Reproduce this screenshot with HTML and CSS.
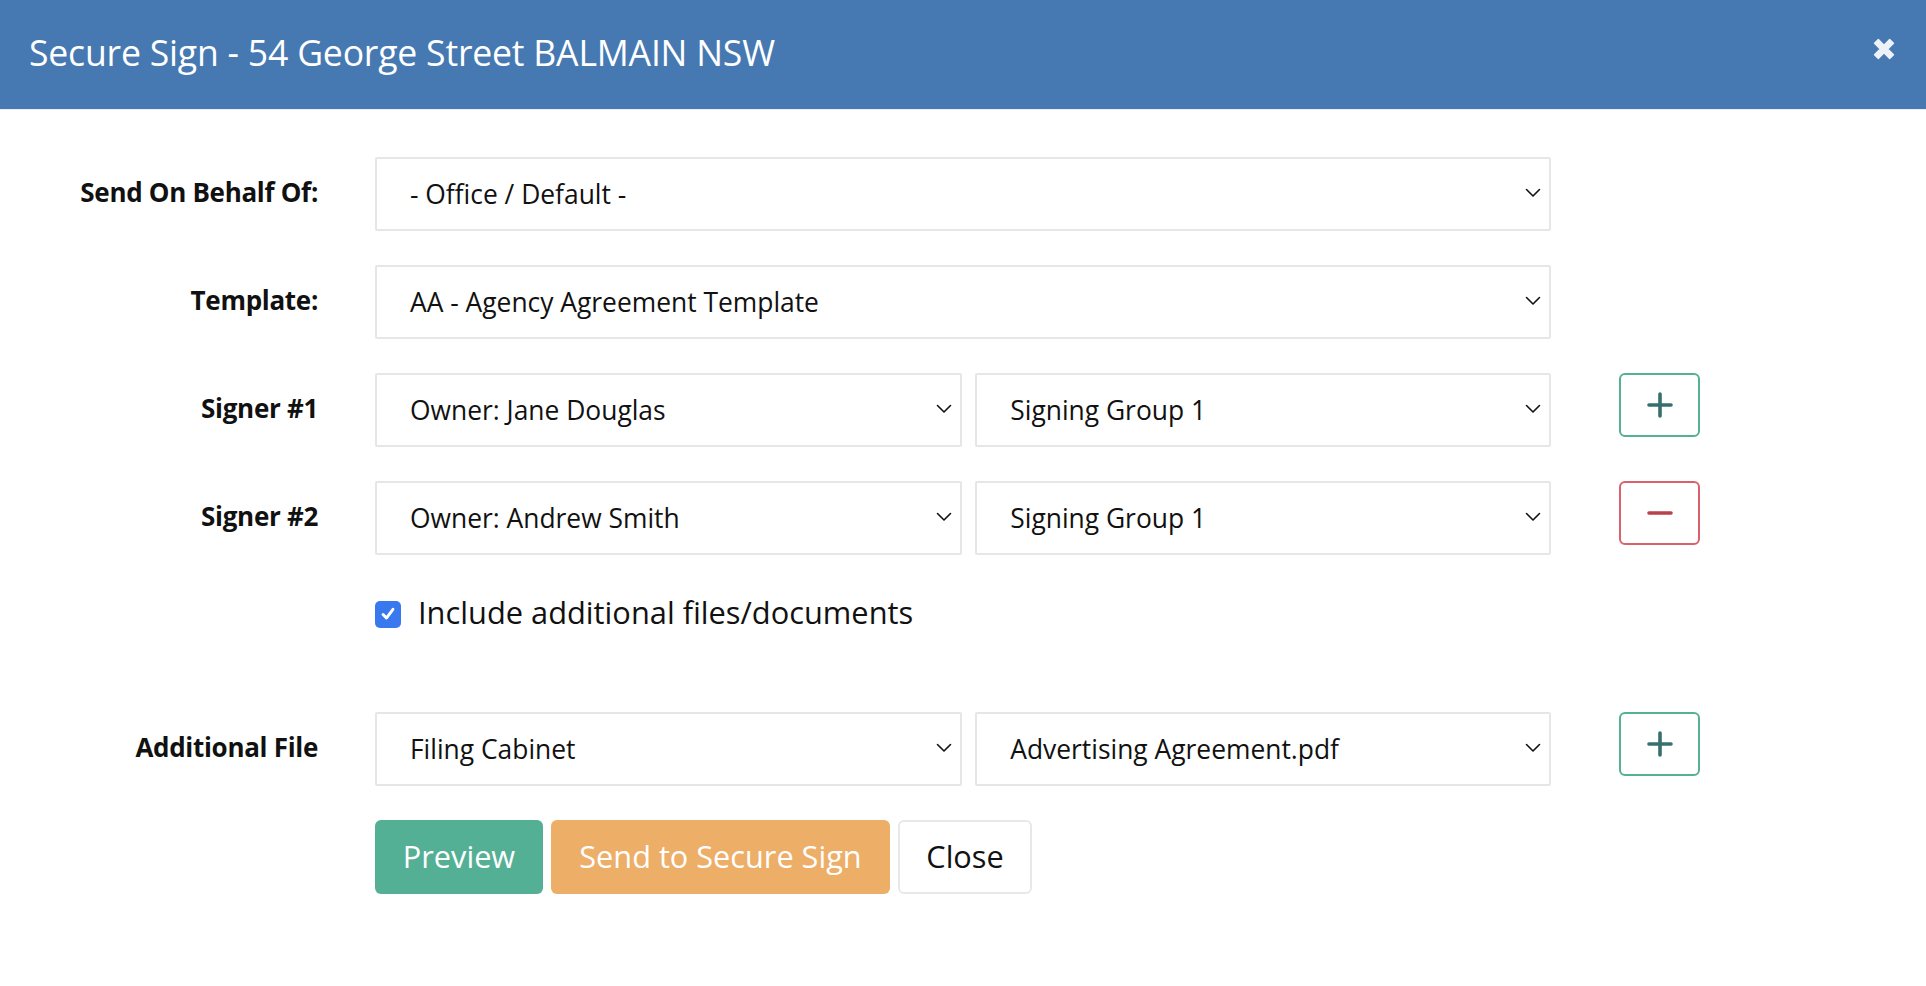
FILE: index.html
```html
<!DOCTYPE html>
<html lang="en">
<head>
<meta charset="utf-8">
<title>Secure Sign</title>
<link rel="stylesheet" href="styles.css">
</head>
<body>
<div class="modal">
  <header class="modal-header">
    <h1 class="modal-title">Secure Sign - 54 George Street BALMAIN NSW</h1>
    <button class="close-btn" aria-label="Close">
      <svg viewBox="0 0 22 22" width="26" height="26"><path d="M3 6.2 6.2 3 11 7.8 15.8 3 19 6.2 14.2 11 19 15.8 15.8 19 11 14.2 6.2 19 3 15.8 7.8 11Z" fill="currentColor" stroke="currentColor" stroke-width="1.2" stroke-linejoin="round"/></svg>
    </button>
  </header>
  <div class="modal-body">
    <div class="form-grid">
      <div class="lbl">Send On Behalf Of:</div>
      <div class="fields">
        <div class="select">- Office / Default -<svg class="chev" viewBox="0 0 16 10"><path d="M1.5 1.5 8 8l6.5-6.5"/></svg></div>
      </div>
      <div class="act"></div>

      <div class="lbl">Template:</div>
      <div class="fields">
        <div class="select">AA - Agency Agreement Template<svg class="chev" viewBox="0 0 16 10"><path d="M1.5 1.5 8 8l6.5-6.5"/></svg></div>
      </div>
      <div class="act"></div>

      <div class="lbl">Signer #1</div>
      <div class="fields split">
        <div class="select">Owner: Jane Douglas<svg class="chev" viewBox="0 0 16 10"><path d="M1.5 1.5 8 8l6.5-6.5"/></svg></div>
        <div class="select">Signing Group 1<svg class="chev" viewBox="0 0 16 10"><path d="M1.5 1.5 8 8l6.5-6.5"/></svg></div>
      </div>
      <div class="act"><button class="icon-btn add"><svg viewBox="0 0 26 26"><path d="M13 2v22M2 13h22"/></svg></button></div>

      <div class="lbl">Signer #2</div>
      <div class="fields split">
        <div class="select">Owner: Andrew Smith<svg class="chev" viewBox="0 0 16 10"><path d="M1.5 1.5 8 8l6.5-6.5"/></svg></div>
        <div class="select">Signing Group 1<svg class="chev" viewBox="0 0 16 10"><path d="M1.5 1.5 8 8l6.5-6.5"/></svg></div>
      </div>
      <div class="act"><button class="icon-btn remove"><svg viewBox="0 0 26 26"><path d="M2 13h22"/></svg></button></div>

      <div class="lbl"></div>
      <label class="check-row">
        <span class="checkbox"><svg viewBox="0 0 16 16"><path d="M3.6 8.4 6.6 11.6 12.4 3.8"/></svg></span>
        <span class="check-text">Include additional files/documents</span>
      </label>
      <div class="act"></div>

      <div class="lbl">Additional File</div>
      <div class="fields split">
        <div class="select">Filing Cabinet<svg class="chev" viewBox="0 0 16 10"><path d="M1.5 1.5 8 8l6.5-6.5"/></svg></div>
        <div class="select">Advertising Agreement.pdf<svg class="chev" viewBox="0 0 16 10"><path d="M1.5 1.5 8 8l6.5-6.5"/></svg></div>
      </div>
      <div class="act"><button class="icon-btn add"><svg viewBox="0 0 26 26"><path d="M13 2v22M2 13h22"/></svg></button></div>

      <div class="lbl"></div>
      <div class="buttons">
        <button class="btn btn-preview">Preview</button>
        <button class="btn btn-send">Send to Secure Sign</button>
        <button class="btn btn-close">Close</button>
      </div>
      <div class="act"></div>
    </div>
  </div>
</div>
</body>
</html>
```

FILE: styles.css
```css
* { box-sizing: border-box; }

html, body {
  margin: 0;
  padding: 0;
  background: #ffffff;
  font-family: "Open Sans", "Liberation Sans", sans-serif;
  color: #111;
}

.modal {
  width: 100%;
  min-height: 986px;
  background: #fff;
}

.modal-header {
  height: 110px;
  background: #4679b2;
  display: flex;
  align-items: center;
  justify-content: space-between;
  padding: 0 28px 0 29px;
  border-bottom: 1px solid #e9eef4;
}

.modal-title {
  margin: 0;
  color: #fff;
  font-weight: 400;
  font-size: 35.6px;
  letter-spacing: -0.2px;
  padding-bottom: 5px;
}

.close-btn {
  border: 0;
  background: transparent;
  color: #eef2f8;
  padding: 0;
  width: 28px;
  height: 28px;
  display: flex;
  align-items: center;
  justify-content: center;
  margin-top: -12px;
}

.modal-body {
  padding: 47px 0 0 0;
}

.form-grid {
  display: grid;
  grid-template-columns: 318px 1176px 81px;
  column-gap: 57px;
  row-gap: 34px;
}

.form-grid > .act { padding-left: 11px; }

.lbl {
  font-weight: 700;
  font-size: 26px;
  text-align: right;
  align-self: center;
  color: #111;
  padding-bottom: 4px;
  letter-spacing: -0.3px;
}

.fields {
  display: grid;
  grid-template-columns: 1fr;
}

.fields.split {
  grid-template-columns: 51fr 50fr;
  column-gap: 13px;
}

.select {
  height: 74px;
  border: 2px solid #e6e6e6;
  background: #fff;
  display: flex;
  align-items: center;
  justify-content: space-between;
  padding: 0 8px 0 33px;
  font-size: 26.4px;
  color: #111;
  border-radius: 2px;
}

.chev {
  width: 16px;
  height: 10px;
  fill: none;
  stroke: #111;
  stroke-width: 1.6;
  stroke-linecap: round;
  stroke-linejoin: round;
  margin-top: -2px;
}

.act {
  display: flex;
  align-items: flex-start;
}

.icon-btn {
  flex: none;
  width: 81px;
  height: 64px;
  background: #fff;
  border-radius: 6px;
  display: flex;
  align-items: center;
  justify-content: center;
  padding: 0;
}

.icon-btn svg {
  width: 26px;
  height: 26px;
  fill: none;
  stroke-width: 3.6;
  stroke-linecap: round;
}

.icon-btn.add { border: 2px solid #55b095; }
.icon-btn.add svg { stroke: #376f70; }
.icon-btn.remove { border: 2px solid #d9616b; }
.icon-btn.remove svg { stroke: #b8424b; }

.check-row {
  display: flex;
  align-items: center;
  gap: 17px;
  height: 50px;
  margin-top: 0;
  margin-bottom: 39px;
}

.checkbox {
  flex: none;
  width: 26px;
  height: 27px;
  border-radius: 5px;
  background: #3a78ef;
  display: flex;
  align-items: center;
  justify-content: center;
}

.checkbox svg {
  width: 18px;
  height: 18px;
  fill: none;
  stroke: #fff;
  stroke-width: 2.6;
  stroke-linecap: round;
  stroke-linejoin: round;
}

.check-text {
  font-size: 30.8px;
  color: #111;
  padding-bottom: 4px;
}

.buttons {
  display: flex;
  gap: 8px;
}

.btn {
  height: 74px;
  border-radius: 6px;
  font-family: "Open Sans", "Liberation Sans", sans-serif;
  font-size: 30.7px;
  padding: 0 10px 3px;
  border: 0;
  color: #fff;
}

.btn-preview { background: #54b095; width: 168px; }
.btn-send { background: #edae68; width: 339px; }
.btn-close {
  background: #fff;
  color: #111;
  border: 2px solid #e8e8e8;
  width: 134px;
}
```
